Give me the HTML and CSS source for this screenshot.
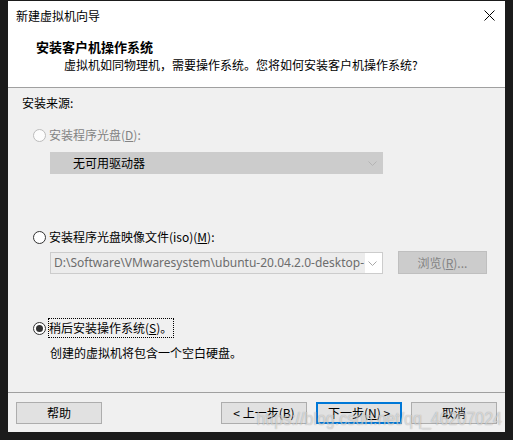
FILE: index.html
```html
<!DOCTYPE html>
<html lang="zh-CN">
<head>
<meta charset="utf-8">
<title>新建虚拟机向导</title>
<link rel="stylesheet" href="styles.css">
</head>
<body>
<div class="window">
  <div class="top">
    <div class="titlebar">
      <span class="title">新建虚拟机向导</span>
      <svg class="close" width="11" height="11" viewBox="0 0 11 11"><path d="M0.5 0.5 L10.5 10.5 M10.5 0.5 L0.5 10.5" stroke="#000" stroke-width="1" fill="none"/></svg>
    </div>
    <div class="head-title">安装客户机操作系统</div>
    <div class="head-sub">虚拟机如同物理机，需要操作系统。您将如何安装客户机操作系统?</div>
  </div>
  <div class="content">
    <div class="section-label">安装来源:</div>
    <div class="radio-row r1 disabled"><span class="radio"></span><span class="label">安装程序光盘(<u>D</u>):</span></div>
    <div class="combo combo-disabled">
      <span class="combo-text">无可用驱动器</span>
      <svg class="chev" width="9" height="5" viewBox="0 0 9 5"><path d="M0.5 0.5 L4.5 4.5 L8.5 0.5" stroke="#b4b4b4" fill="none"/></svg>
    </div>
    <div class="radio-row r2"><span class="radio"></span><span class="label">安装程序光盘映像文件(iso)(<u>M</u>):</span></div>
    <div class="file-row">
      <div class="combo combo-file">
        <span class="path">D:\Software\VMwaresystem\ubuntu-20.04.2.0-desktop-</span>
        <span class="fill"></span>
        <svg class="chev" width="9" height="5" viewBox="0 0 9 5"><path d="M0.5 0.5 L4.5 4.5 L8.5 0.5" stroke="#a8a8a8" fill="none"/></svg>
      </div>
      <div class="btn btn-disabled browse">浏览(<u>R</u>)...</div>
    </div>
    <div class="radio-row r3"><span class="radio checked"></span><span class="label focus">稍后安装操作系统(<u>S</u>)。</span></div>
    <div class="desc">创建的虚拟机将包含一个空白硬盘。</div>
  </div>
  <div class="footer">
    <div class="btn">帮助</div>
    <div class="spacer"></div>
    <div class="btn">&lt; 上一步(B)</div>
    <div class="btn btn-default">下一步(<u>N</u>) &gt;</div>
    <div class="btn">取消</div>
  </div>
  <div class="watermark">https://blog.csdn.net/qq_46207024</div>
</div>
</body>
</html>
```

FILE: styles.css
```css
html, body {
  margin: 0;
  padding: 0;
  background: #1b1b1b;
}
body {
  width: 513px;
  height: 440px;
  overflow: hidden;
  font-family: "Noto Sans CJK SC", "Noto Sans", sans-serif;
  font-size: 12px;
  color: #000;
}
u { text-decoration: underline; text-underline-offset: 1px; }

.window {
  position: relative;
  margin: 1px 0 0 8px;
  width: 497px;
  height: 431px;
  background: #f0f0f0;
  display: flex;
  flex-direction: column;
  overflow: hidden;
}

.top {
  height: 86px;
  background: #fff;
  border-bottom: 1px solid #a0a0a0;
  flex: none;
}
.titlebar {
  height: 29px;
  display: flex;
  align-items: center;
  justify-content: space-between;
  padding: 0 10px 0 8px;
}
.title { line-height: 16px; }
.close { display: block; }
.head-title {
  margin-top: 8px;
  padding-left: 28px;
  font-size: 13px;
  font-weight: bold;
  line-height: 18px;
}
.head-sub {
  padding-left: 56px;
  line-height: 18px;
}

.content {
  flex: 1;
  padding-top: 6px;
}
.section-label {
  margin-left: 14px;
  line-height: 18px;
}
.radio-row {
  display: flex;
  align-items: center;
  margin-left: 25px;
  height: 18px;
}
.r1 { margin-top: 14px; }
.r2 { margin-top: 54px; }
.r3 { margin-top: 45px; }
.radio {
  width: 11px;
  height: 11px;
  border: 1px solid #333;
  border-radius: 50%;
  background: #fff;
  margin-right: 3px;
  position: relative;
  flex: none;
}
.radio.checked::after {
  content: "";
  position: absolute;
  left: 2px;
  top: 2px;
  width: 7px;
  height: 7px;
  border-radius: 50%;
  background: #333;
}
.disabled .radio { border-color: #bcbcbc; background: #fcfcfc; }
.disabled .label { color: #838383; }
.label { line-height: 18px; white-space: nowrap; }
.focus {
  outline: 1px dotted #000;
  outline-offset: 0;
  padding-right: 1px;
}

.combo {
  box-sizing: border-box;
  width: 333px;
  height: 22px;
  margin-left: 42px;
  display: flex;
  align-items: center;
  border: 1px solid #cccccc;
}
.combo-disabled {
  margin-top: 8px;
  background: #cccccc;
}
.combo-text {
  flex: 1;
  padding-left: 22px;
  line-height: 18px;
}
.chev { flex: none; margin-right: 5px; margin-left: 4px; }
.combo-file {
  background: #fff;
  margin-top: 1px;
  margin-left: 0;
}
.path {
  height: 20px;
  line-height: 20px;
  padding-left: 3px;
  padding-right: 1px;
  background: #ececec;
  color: #6d6d6d;
  white-space: nowrap;
  font-family: "Noto Sans", "Noto Sans CJK SC", sans-serif;
  font-size: 12px;
  flex: none;
}
.fill { flex: 1; }
.combo-file .chev { margin-left: 2px; }
.file-row {
  display: flex;
  align-items: flex-start;
  margin-top: 5px;
  margin-left: 42px;
}
.desc {
  margin-top: 7px;
  margin-left: 42px;
  line-height: 18px;
}

.btn {
  box-sizing: border-box;
  width: 86px;
  height: 22px;
  border: 1px solid #adadad;
  background: #e1e1e1;
  display: flex;
  align-items: center;
  justify-content: center;
  line-height: 18px;
  white-space: nowrap;
  flex: none;
}
.btn-default { border: 2px solid #0078d7; }
.btn-disabled {
  background: #cccccc;
  border-color: #bfbfbf;
  color: #838383;
}
.browse {
  width: 89px;
  height: 23px;
  margin-left: 15px;
}

.footer {
  flex: none;
  border-top: 1px solid #a0a0a0;
  padding: 9px 8px 8px 8px;
  display: flex;
  gap: 9px;
}
.spacer { flex: 1; }

.watermark {
  position: absolute;
  right: 3px;
  bottom: 0px;
  font-family: "Liberation Sans", sans-serif;
  font-size: 16px;
  line-height: 22px;
  transform: scaleY(1.2);
  transform-origin: bottom right;
  color: rgba(255, 255, 255, 0.55);
  text-shadow: 0 0 1px rgba(0, 0, 0, 0.35);
  pointer-events: none;
  white-space: nowrap;
}
```
